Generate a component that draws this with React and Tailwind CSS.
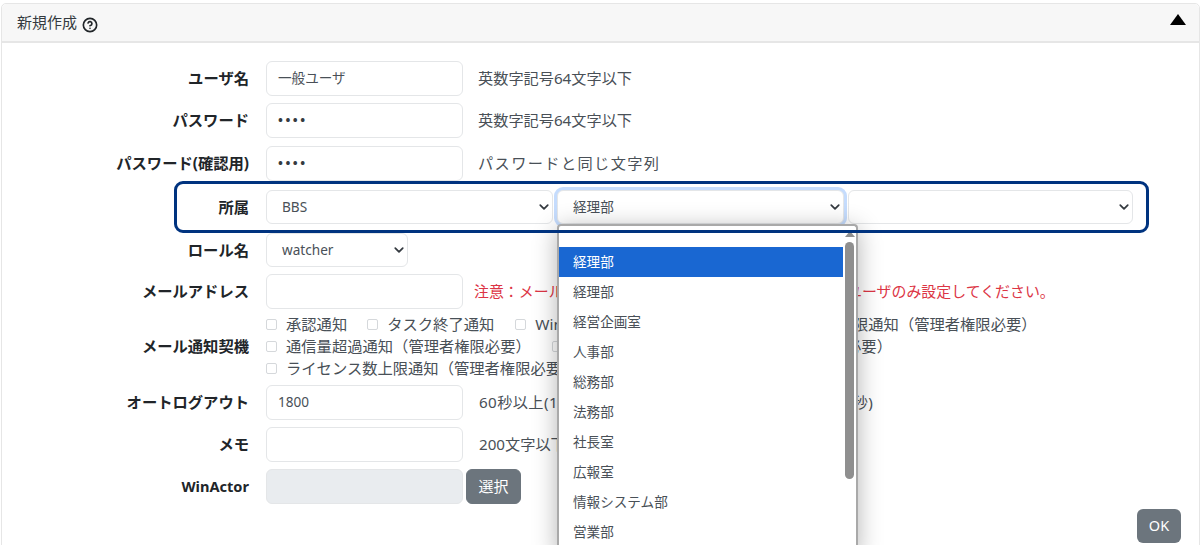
import React from "react";
import { CircleHelp } from "lucide-react";

const departments = ["経理部", "経理部", "経営企画室", "人事部", "総務部", "法務部", "社長室", "広報室", "情報システム部", "営業部"];

const Chevron = () => (
  <svg viewBox="0 0 16 16" className="w-[10px] h-[10px] shrink-0 text-[#343a40]" fill="none" stroke="currentColor" strokeWidth="2.8" strokeLinecap="round" strokeLinejoin="round">
    <path d="m2 5 6 6 6-6" />
  </svg>
);

const Select = ({ value, className }) => (
  <div className={`h-[34px] flex items-center justify-between pl-[15px] pr-[3px] bg-white border border-[#e4e6e8] rounded-[6px] text-[13.6px] text-[#495057] ${className}`}>
    <span>{value}</span>
    <Chevron />
  </div>
);

const Input = ({ value, disabled }) => (
  <div className={`w-[197px] h-[35px] flex items-center px-[11px] border border-[#e4e6e8] rounded-[6px] text-[13.6px] text-[#495057] ${disabled ? "bg-[#e9ecef]" : "bg-white"}`}>
    {value}
  </div>
);

const Dots = () => <span className="text-[13px] font-bold tracking-[2.5px] text-[#343a40]">••••</span>;

const Hint = ({ children, className = "" }) => (
  <span className={`ml-[15px] text-[15.2px] text-[#495057] whitespace-nowrap ${className}`}>{children}</span>
);

const Row = ({ label, children, className = "" }) => (
  <div className={`flex items-center ${className}`}>
    <div className="w-[247px] shrink-0 text-right text-[15.3px] font-bold text-[#212529] whitespace-nowrap">{label}</div>
    <div className="ml-[17px] flex items-center min-w-0 flex-1">{children}</div>
  </div>
);

const Check = ({ label, className = "" }) => (
  <span className={`flex items-center whitespace-nowrap ${className}`}>
    <span className="w-[11px] h-[11px] mr-[9px] bg-white border border-[#d5d8db] rounded-[2px]" />
    {label}
  </span>
);

export default function App() {
  return (
    <div className="relative w-[1200px] h-[545px] overflow-hidden bg-white font-['Noto_Sans','Noto_Sans_CJK_JP',sans-serif] text-[#212529]">
      <div className="mt-[3px] ml-[1px] h-[560px] bg-white border border-[#e6e6e6] rounded-t-[5px]">
        <div className="h-[39px] flex items-center justify-between pl-[15px] pr-[13px] bg-[#f7f7f7] border-b-2 border-[#e6e6e6] rounded-t-[5px]">
          <div className="flex items-center gap-[5px] text-[15px] text-[#343a40]">
            <span>新規作成</span>
            <CircleHelp className="w-[16px] h-[16px] mt-[4px] text-[#212529]" strokeWidth={2.5} />
          </div>
          <svg viewBox="0 0 16 12" className="w-[16px] h-[12px] mb-[5px] text-black" fill="currentColor">
            <polygon points="8,0 16,11 0,11" />
          </svg>
        </div>

        <div className="pt-[18px] flex flex-col">
          <Row label="ユーザ名">
            <Input value="一般ユーザ" />
            <Hint>英数字記号64文字以下</Hint>
          </Row>
          <Row label="パスワード" className="mt-[7px]">
            <Input value={<Dots />} />
            <Hint>英数字記号64文字以下</Hint>
          </Row>
          <Row label="パスワード(確認用)" className="mt-[8px]">
            <Input value={<Dots />} />
            <Hint className="tracking-[1.4px]">パスワードと同じ文字列</Hint>
          </Row>

          <Row label="所属" className="mt-[9px]">
            <div className="flex items-center">
              <Select value="BBS" className="w-[287px]" />
              <Select value="経理部" className="w-[287px] ml-[4px] border-[#86b7fe] ring-[3px] ring-[#c5dcfd]" />
              <Select value="" className="w-[285px] ml-[4px]" />
            </div>
          </Row>

          <Row label="ロール名" className="mt-[9px]">
            <Select value="watcher" className="w-[142px] pl-[14px]" />
          </Row>

          <Row label="メールアドレス" className="mt-[7px]">
            <Input value="" />
            <span className="ml-[11px] text-[14.93px] text-[#dc3545] whitespace-nowrap">
              注意：メール通知を受け取りたいメールアドレスのあるユーザのみ設定してください。
            </span>
          </Row>

          <Row label="メール通知契機" className="mt-[4px]">
            <div className="flex flex-col text-[15.3px] text-[#495057] leading-[22px]">
              <div className="flex items-center">
                <Check label="承認通知" />
                <Check label="タスク終了通知" className="ml-[20px]" />
                <Check label="WinActorシナリオ異常通知" className="ml-[21px]" />
                <Check label="ライセンス期限通知（管理者権限必要）" className="ml-[18px]" />
              </div>
              <div className="flex items-center">
                <Check label="通信量超過通知（管理者権限必要）" />
                <Check label="ディスク空き容量不足通知（管理者権限必要）" className="ml-[21px]" />
              </div>
              <div className="flex items-center">
                <Check label="ライセンス数上限通知（管理者権限必要）" />
              </div>
            </div>
          </Row>

          <Row label="オートログアウト" className="mt-[6px]">
            <Input value="1800" />
            <Hint className="ml-[16px] tracking-[0.4px]">60秒以上(1分=60秒、1時間=3600秒、1週間=604800秒)</Hint>
          </Row>

          <Row label="メモ" className="mt-[7px]">
            <Input value="" />
            <Hint className="ml-[16px]">200文字以下</Hint>
          </Row>

          <Row label={<span className="text-[14.6px]">WinActor</span>} className="mt-[7px]">
            <Input value="" disabled />
            <button className="ml-[3px] w-[55px] h-[35px] bg-[#6c757d] border border-[#6c757d] rounded-[6px] text-[15px] text-white">選択</button>
          </Row>

          <div className="mt-[5px] pr-[18px] flex justify-end">
            <button className="w-[44px] h-[34px] bg-[#6c757d] rounded-[6px] text-[14.5px] text-white">OK</button>
          </div>
        </div>
      </div>

      {/* open dropdown of the second select */}
      <div className="absolute left-[557px] top-[224px] w-[301px] h-[330px] bg-white border-x-2 border-t-2 border-[#a9a9a9] rounded-t-[4px] shadow-[0_4px_24px_rgba(0,0,0,0.3)] flex text-[13.6px] text-[#495057]">
        <div className="flex-1 pt-[21px]">
          {departments.map((d, i) => (
            <div key={i} className={`h-[30px] flex items-center pl-[14px] ${i === 0 ? "bg-[#1967d2] text-white" : ""}`}>{d}</div>
          ))}
        </div>
        <div className="w-[13px] flex flex-col items-center pt-[5px]">
          <div className="w-0 h-0 border-x-[5px] border-x-transparent border-b-[6px] border-b-[#8f8f8f]" />
          <div className="mt-[5px] w-[9px] h-[237px] rounded-full bg-[#8f8f8f]" />
        </div>
      </div>

      {/* highlight frame drawn over the form */}
      <div className="absolute left-[174px] top-[181px] w-[975px] h-[52px] border-[3px] border-[#00337f] rounded-[9px] pointer-events-none" />
    </div>
  );
}
